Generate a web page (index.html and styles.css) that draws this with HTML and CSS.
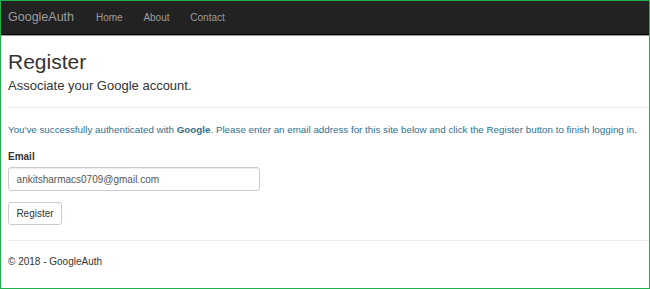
FILE: index.html
```html
<!DOCTYPE html>
<html lang="en">
<head>
    <meta charset="UTF-8">
    <meta name="viewport" content="width=device-width, initial-scale=1.0">
    <title>Register - GoogleAuth</title>
    <link rel="stylesheet" href="styles.css">
</head>
<body>
    <div class="frame">
        <nav class="navbar">
            <a href="/" class="brand">GoogleAuth</a>
            <ul class="nav-links">
                <li><a href="/">Home</a></li>
                <li><a href="/Home/About">About</a></li>
                <li><a href="/Home/Contact">Contact</a></li>
            </ul>
        </nav>

        <div class="body-content">
            <h2>Register</h2>
            <h4>Associate your Google account.</h4>
            <hr class="rule-top">

            <form class="register-form">
                <p class="text-info">You've successfully authenticated with <strong>Google</strong>. Please enter an email address for this site below and click the Register button to finish logging in.</p>
                <div class="form-group">
                    <label for="Email">Email</label>
                    <input type="text" id="Email" class="form-control" value="ankitsharmacs0709@gmail.com">
                </div>
                <button type="submit" class="btn">Register</button>
            </form>

            <hr class="rule-footer">
            <footer>
                <p>&copy; 2018 - GoogleAuth</p>
            </footer>
        </div>
    </div>
</body>
</html>
```
FILE: styles.css
```css
body {
    margin: 0;
    font-family: "Liberation Sans", Arial, sans-serif;
    font-size: 10px;
    line-height: 1.42857;
    color: #333;
    background: #fff;
}
.frame {
    width: 650px;
    height: 289px;
    box-sizing: border-box;
    border: 1px solid #22b14c;
    overflow: hidden;
}

/* NAVBAR */
.navbar {
    display: flex;
    align-items: center;
    height: 33px;
    background-color: #222;
    border-bottom: 1px solid #080808;
    box-shadow: 0 1px 0 #9a9a9a;
    position: relative;
    z-index: 1;
}
.brand {
    padding: 0 11.5px 0 7px;
    font-size: 12.5px;
    line-height: 33px;
    color: #9d9d9d;
    text-decoration: none;
}
.nav-links {
    display: flex;
    list-style: none;
    margin: 0;
    padding: 0;
}
.nav-links a {
    display: block;
    padding: 0 10.4px;
    line-height: 33px;
    color: #9d9d9d;
    text-decoration: none;
}

/* CONTENT */
.body-content {
    padding-left: 7px;
}
h2 {
    margin: 15px 0 6px;
    font-size: 21px;
    font-weight: 500;
    line-height: 1.1;
}
h4 {
    margin: 0;
    font-size: 13px;
    font-weight: 500;
    line-height: 1.1;
}
hr {
    margin: 0;
    border: 0;
    border-top: 1px solid #eee;
}
.rule-top {
    margin-top: 14px;
}
.register-form {
    margin-top: 14.4px;
}
.text-info {
    margin: 0 0 13.4px;
    font-size: 9.8px;
    white-space: nowrap;
    color: #31708f;
}
.form-group label {
    display: block;
    margin-bottom: 3px;
    font-weight: bold;
}
.form-control {
    display: block;
    box-sizing: border-box;
    width: 252px;
    height: 24px;
    padding: 0 7.6px;
    font-family: inherit;
    font-size: 10px;
    color: #555;
    border: 1px solid #ccc;
    border-radius: 3px;
    box-shadow: inset 0 1px 1px rgba(0, 0, 0, 0.075);
}
.btn {
    display: block;
    margin-top: 11px;
    box-sizing: border-box;
    height: 23px;
    padding: 0 7.4px;
    font-family: inherit;
    font-size: 10px;
    color: #333;
    background: #fff;
    border: 1px solid #ccc;
    border-radius: 3px;
    cursor: pointer;
}
.rule-footer {
    margin-top: 15px;
}
footer p {
    margin: 13.4px 0 0;
}
```
